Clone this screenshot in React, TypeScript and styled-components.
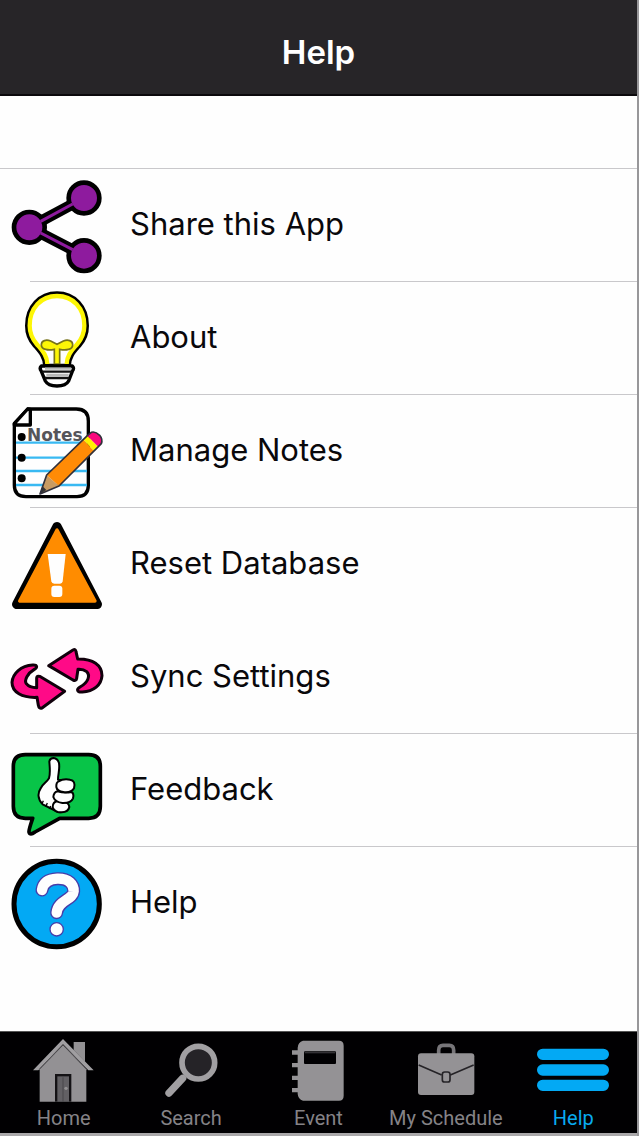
import React from 'react';
import styled, { createGlobalStyle } from 'styled-components';

const GlobalStyle = createGlobalStyle`
  *, *::before, *::after { box-sizing: border-box; }
  body {
    margin: 0;
    background: #fefefe;
    font-family: Inter, Roboto, "Liberation Sans", sans-serif;
  }
`;

const Screen = styled.div`
  display: flex;
  flex-direction: column;
  min-height: 100vh;
  background: #fefefe;
  border-right: 2px solid #98979a;
`;

const Header = styled.header`
  display: flex;
  align-items: center;
  justify-content: center;
  height: 96px;
  padding-top: 10px;
  background: #272528;
  border-bottom: 2px solid #0b090c;
`;

const Title = styled.h1`
  margin: 0;
  font-size: 33px;
  line-height: 40px;
  font-weight: 600;
  color: #fff;
`;

const Main = styled.main`
  flex: 1;
  padding-top: 72px;
`;

const List = styled.ul`
  margin: 0;
  padding: 0;
  list-style: none;
  border-top: 1px solid #c9c8cb;
`;

const Item = styled.li<{ $divided: boolean }>`
  background: linear-gradient(#c9c8cb, #c9c8cb) no-repeat 30px 100%;
  background-size: ${(p) => (p.$divided ? '100% 1px' : '0 0')};
  padding-bottom: 1px;
`;

const RowButton = styled.button`
  display: flex;
  align-items: center;
  gap: 10px;
  width: 100%;
  height: 112px;
  padding: 0;
  border: 0;
  background: none;
  color: #09080b;
  font: inherit;
  font-size: 31px;
  line-height: 40px;
  text-align: left;
  cursor: pointer;
`;

const RowLabel = styled.span`
  padding-bottom: 2px;
`;

const RowIcon = styled.svg`
  flex: none;
  width: 120px;
  height: 112px;
`;

const TabBar = styled.nav`
  display: grid;
  grid-template-columns: repeat(5, 1fr);
  height: 105px;
  background: #010002;
  border-top: 1px solid #555;
  border-bottom: 3px solid #aaa8aa;
`;

const Tab = styled.a<{ $active?: boolean }>`
  display: flex;
  flex-direction: column;
  align-items: center;
  padding-top: 2px;
  color: ${(p) => (p.$active ? '#08aaf0' : '#858387')};
  font-family: Roboto, Inter, sans-serif;
  font-size: 20px;
  line-height: 24px;
  white-space: nowrap;
  text-decoration: none;
`;

const TabIcon = styled.svg`
  width: 96px;
  height: 72px;
`;

const ShareIcon = () => (
  <RowIcon viewBox="0 -3 360 336" aria-hidden="true">
    <g stroke="#000" strokeWidth="14" fill="#8e1b9e">
      <path d="M88 172L252 84M88 172L252 257" strokeWidth="33" />
      <circle cx="252" cy="84" r="46" />
      <circle cx="252" cy="257" r="46" />
      <circle cx="88" cy="172" r="46" />
    </g>
    <path d="M122 154L218 102M122 189L218 239" stroke="#8e1b9e" strokeWidth="9" />
  </RowIcon>
);

const BulbIcon = () => (
  <RowIcon viewBox="0 -6 360 336" aria-hidden="true">
    <path
      d="M134 244C133 218 119 204 102 184C87 167 80 148 80 125C80 68 118 27 171 27C224 27 262 68 262 125C262 148 255 167 240 184C223 204 209 218 208 244Z"
      fill="#fefefe"
      stroke="#000"
      strokeWidth="10"
    />
    <path
      d="M142 240C141 213 126 199 110 180C96 163 89 147 89 125C89 72 123 36 171 36C219 36 253 72 253 125C253 147 246 163 232 180C216 199 201 213 200 240"
      fill="none"
      stroke="#fdf606"
      strokeWidth="13"
    />
    <path
      d="M163 240V196C145 200 124 197 124 182C124 169 139 166 152 171L171 181L190 171C203 166 218 169 218 182C218 197 198 200 179 196V240Z"
      fill="#fdf606"
      stroke="#77731a"
      strokeWidth="5"
    />
    <path d="M124 246H217Q224 253 217 262L206 291Q198 306 171 306Q144 306 136 291L124 262Q117 253 124 246Z" fill="#fefefe" stroke="#000" strokeWidth="10" strokeLinejoin="round" />
    <path d="M127 263H215M135 282H207" stroke="#111" strokeWidth="7" />
    <path d="M135 254H213M139 273H206" stroke="#b9b9b9" strokeWidth="7" />
  </RowIcon>
);

const NotesIcon = () => (
  <RowIcon viewBox="0 -9 360 336" aria-hidden="true">
    <path d="M83 33H229Q265 33 265 69V262Q265 296 231 296H78Q43 296 43 262V77Z" fill="#fefefe" stroke="#000" strokeWidth="10" strokeLinejoin="round" />
    <path d="M48 134H261M48 179H261M48 219H261M48 261H261" stroke="#38b9f2" strokeWidth="7" />
    <path d="M43 81H91V34L83 33L43 77Z" fill="#fefefe" stroke="#000" strokeWidth="10" strokeLinejoin="round" />
    <circle cx="65" cy="117" r="12" />
    <circle cx="65" cy="179" r="12" />
    <circle cx="65" cy="241" r="12" />
    <text x="81" y="130" fontFamily="'DejaVu Sans', sans-serif" fontWeight="700" fontSize="51" fill="#55555a">Notes</text>
    <path d="M120 288L140 231L177 264Z" fill="#c89b62" />
    <path d="M140 231L249 124L283 160L177 264Z" fill="#ff8b06" />
    <path d="M249 124L262 113L295 147L283 160Z" fill="#fff100" />
    <path d="M262 113L274 103Q286 99 299 112Q309 124 304 137L295 147Z" fill="#fa087e" />
    <path d="M120 288L127 264L139 276Z" fill="#333" />
    <path d="M120 288L140 231L262 113L274 103Q286 99 299 112Q309 124 304 137L177 264Z" fill="none" stroke="#30303b" strokeWidth="5" strokeLinejoin="round" />
  </RowIcon>
);

const WarningIcon = () => (
  <RowIcon viewBox="0 -12 360 336" aria-hidden="true">
    <path d="M171 44L50 277H292Z" stroke="#000" strokeWidth="28" strokeLinejoin="round" />
    <path d="M171 54L59 267H285Z" fill="#ff8c00" stroke="#ff8c00" strokeWidth="10" strokeLinejoin="round" />
    <path d="M143 126H197L188 208Q187 215 180 215H163Q155 215 154 208Z" fill="#fefefe" />
    <rect x="154" y="221" width="33" height="34" rx="9" fill="#fefefe" />
  </RowIcon>
);

const SyncIcon = () => (
  <RowIcon viewBox="0 -45 360 336" aria-hidden="true">
    <g fill="#ff0a87" stroke="#10000b" strokeWidth="9" strokeLinejoin="round">
      <path d="M98 87C112 86 114 94 102 101C83 112 72 132 79 143Q88 155 110 155V126Q111 119 119 121L194 166L126 216Q117 219 115 208L111 184C66 186 36 169 36 139C38 112 63 89 98 87Z" />
      <path d="M146 89L219 42Q227 38 228 47L233 69C279 68 306 88 306 119C304 147 281 167 247 168C230 169 229 160 240 153C264 140 272 119 260 107Q250 99 234 100L230 127Q229 136 219 132Z" />
    </g>
  </RowIcon>
);

const FeedbackIcon = () => (
  <RowIcon viewBox="0 -18 360 336" aria-hidden="true">
    <path d="M76 44H266Q301 44 301 79V199Q301 235 266 235H179L105 276Q90 287 87 276Q86 270 98 235H76Q40 235 40 199V79Q40 44 76 44Z" fill="#08c448" stroke="#000" strokeWidth="11" strokeLinejoin="round" />
    <g fill="#fefefe" stroke="#000" strokeWidth="6" strokeLinejoin="round">
      <path d="M148 64Q150 54 161 54Q172 55 177 69C180 91 174 99 174 119L187 120L203 196Q198 220 174 216L128 193C112 177 113 158 122 145C127 132 140 127 147 115C152 98 149 83 148 64Z" />
      <path d="M175 183Q158 184 158 202Q165 218 185 217Q205 216 208 201Q206 186 191 185Z" />
      <path d="M173 154Q161 157 160 171Q165 186 187 189Q213 190 219 175Q223 160 214 156Q193 160 173 154Z" />
      <path d="M176 124Q168 127 169 141Q171 154 190 156Q214 159 222 145Q228 122 210 119Q190 115 176 124Z" />
    </g>
    <path d="M126 191L130 182M137 200L142 189M148 207L152 198" stroke="#000" strokeWidth="4" />
  </RowIcon>
);

const QuestionIcon = () => (
  <RowIcon viewBox="0 -9 360 336" aria-hidden="true">
    <circle cx="170" cy="162" r="128" fill="#03a9f4" stroke="#000" strokeWidth="15" />
    <g fill="none" strokeLinecap="round" strokeLinejoin="round">
      <path d="M126 120Q131 88 172 86C207 85 222 104 221 124C219 150 174 150 170 188" stroke="#473da9" strokeWidth="39" />
      <path d="M126 120Q131 88 172 86C207 85 222 104 221 124C219 150 174 150 170 188" stroke="#fefefe" strokeWidth="31" />
    </g>
    <circle cx="170" cy="238" r="20" fill="#fefefe" stroke="#473da9" strokeWidth="4" />
  </RowIcon>
);

const HomeIcon = () => (
  <TabIcon viewBox="47 42 288 216" aria-hidden="true">
    <path d="M118 148L188 76L258 148V245H118Z" fill="#939194" />
    <path d="M220 66H254V125L220 90Z" fill="#939194" />
    <path d="M98 151L188 57L280 151H264L188 73L114 151Z" fill="#a09ea1" />
    <path d="M118 146L188 74L258 146" fill="none" stroke="#555357" strokeWidth="3" />
    <path d="M164 245V162H213V245Z" fill="#141215" />
    <path d="M171 245V169H206V245Z" fill="#626064" />
    <path d="M188 172V245" stroke="#48464a" strokeWidth="3" />
    <circle cx="197" cy="205" r="5" fill="#929092" />
  </TabIcon>
);

const SearchIcon = () => (
  <TabIcon viewBox="429 42 288 216" aria-hidden="true">
    <circle cx="595" cy="128" r="49" fill="#252327" stroke="#a19fa2" strokeWidth="17" />
    <path d="M548 175L507 219" stroke="#a19fa2" strokeWidth="22" strokeLinecap="round" />
  </TabIcon>
);

const EventIcon = () => (
  <TabIcon viewBox="811 42 288 216" aria-hidden="true">
    <path d="M910 62H1018Q1032 62 1032 77V227Q1032 242 1018 242H910Q895 238 894 221V217H877V204H894V180H877V167H894V142H877V129H894V104H877V91H894V83Q895 66 910 62Z" fill="#949295" />
    <rect x="913" y="94" width="96" height="38" rx="3" fill="#010002" />
    <path d="M915 98H1007" stroke="#343236" strokeWidth="4" />
  </TabIcon>
);

const ScheduleIcon = () => (
  <TabIcon viewBox="234 42 288 216" aria-hidden="true">
    <path d="M356 104V91Q356 76 369 76H388Q401 76 401 91V104" fill="none" stroke="#777579" strokeWidth="11" />
    <rect x="294" y="100" width="169" height="125" rx="9" fill="#949295" />
    <path d="M296 135L365 165M391 165L461 135" stroke="#252327" strokeWidth="5" />
    <rect x="367" y="156" width="23" height="30" rx="7" fill="#949295" stroke="#252327" strokeWidth="5" />
  </TabIcon>
);

const MenuIcon = () => (
  <TabIcon viewBox="616 42 288 216" aria-hidden="true">
    <path d="M669 103H851M669 150H851M669 196H851" stroke="#03a9f4" strokeWidth="34" strokeLinecap="round" />
  </TabIcon>
);

const items = [
  { label: 'Share this App', Icon: ShareIcon, divided: true },
  { label: 'About', Icon: BulbIcon, divided: true },
  { label: 'Manage Notes', Icon: NotesIcon, divided: true },
  { label: 'Reset Database', Icon: WarningIcon, divided: false },
  { label: 'Sync Settings', Icon: SyncIcon, divided: true },
  { label: 'Feedback', Icon: FeedbackIcon, divided: true },
  { label: 'Help', Icon: QuestionIcon, divided: false },
];

const tabs = [
  { label: 'Home', Icon: HomeIcon },
  { label: 'Search', Icon: SearchIcon },
  { label: 'Event', Icon: EventIcon },
  { label: 'My Schedule', Icon: ScheduleIcon },
  { label: 'Help', Icon: MenuIcon, active: true },
];

export default function App() {
  return (
    <>
      <GlobalStyle />
      <Screen>
        <Header>
          <Title>Help</Title>
        </Header>
        <Main>
          <List>
            {items.map(({ label, Icon, divided }) => (
              <Item key={label} $divided={divided}>
                <RowButton type="button">
                  <Icon />
                  <RowLabel>{label}</RowLabel>
                </RowButton>
              </Item>
            ))}
          </List>
        </Main>
        <TabBar aria-label="Main">
          {tabs.map(({ label, Icon, active }) => (
            <Tab key={label} href="#" $active={active} aria-current={active ? 'page' : undefined}>
              <Icon />
              {label}
            </Tab>
          ))}
        </TabBar>
      </Screen>
    </>
  );
}
